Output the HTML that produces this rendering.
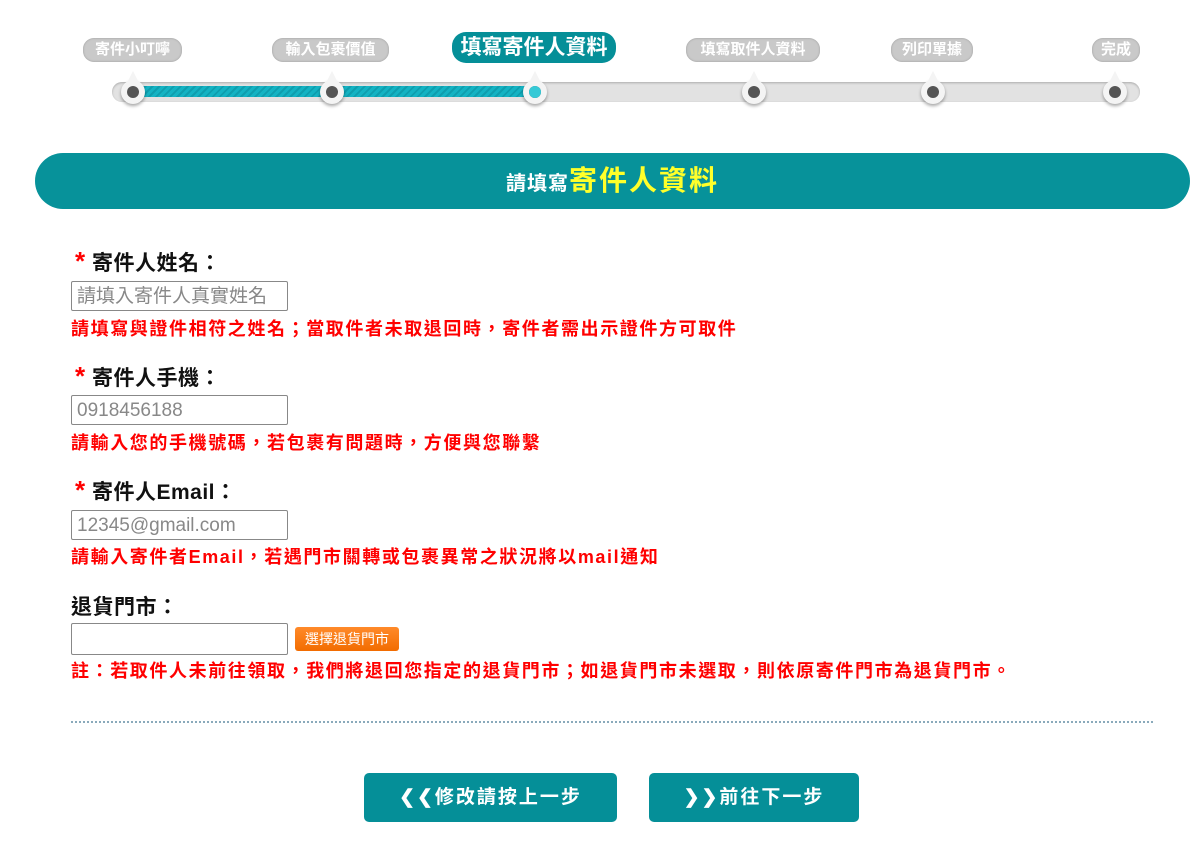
<!DOCTYPE html>
<html><head><meta charset="utf-8"><style>
body{margin:0;width:1200px;height:852px;background:#fff;font-family:"Liberation Sans","Noto Sans CJK TC",sans-serif;position:relative;overflow:hidden}
.a{position:absolute}
.pill{position:absolute;background:#c9c9c9;color:#fff;font-weight:bold;font-size:15px;border-radius:11px;height:24px;line-height:24px;text-align:center;top:38px;box-shadow:0 0 2px #999 inset}
.node{position:absolute;top:80px;width:24px;height:24px;border-radius:50%;background:#f4f4f4;box-shadow:0 2px 3px rgba(0,0,0,.35)}
.node::after{content:"";position:absolute;left:6px;top:6px;width:12px;height:12px;border-radius:50%;background:#555}
.node::before{content:"";position:absolute;left:6px;top:-9px;border-left:6px solid transparent;border-right:6px solid transparent;border-bottom:12px solid #f4f4f4}
.lbl{position:absolute;font-size:21px;font-weight:bold;color:#111;letter-spacing:0.5px}
.lbl b{color:#f00;font-size:26px}
.inp{position:absolute;left:71px;height:30px;border:1px solid #888;border-radius:2px;font-size:19px;color:#888;line-height:30px;padding-left:5px;box-sizing:border-box;width:217px}
.hint{position:absolute;left:71px;color:#f00;font-weight:bold;font-size:18px;letter-spacing:1.6px}
.btn{position:absolute;top:773px;height:49px;background:#058f98;color:#fff;border-radius:5px;font-weight:bold;font-size:19px;text-align:center;line-height:49px;letter-spacing:2px}
</style></head><body>
<div class="a" style="left:112px;top:82px;width:1028px;height:20px;background:#e2e2e2;border-radius:10px;box-shadow:0 1px 2px #aaa inset"></div>
<div class="a" style="left:133px;top:86px;width:402px;height:11px;background:repeating-linear-gradient(135deg,#14b3c3 0 3px,#0e9eae 3px 5px)"></div>
<div class="pill" style="left:83px;width:99px">寄件小叮嚀</div>
<div class="pill" style="left:272px;width:117px">輸入包裹價值</div>
<div class="a" style="left:452px;top:32px;width:164px;height:31px;background:#058f98;color:#fff;border-radius:14px;font-size:21px;font-weight:bold;text-align:center;line-height:31px">填寫寄件人資料</div>
<div class="pill" style="left:686px;width:134px">填寫取件人資料</div>
<div class="pill" style="left:891px;width:82px">列印單據</div>
<div class="pill" style="left:1092px;width:48px">完成</div>
<div class="node" style="left:121px"></div>
<div class="node" style="left:320px"></div>
<div class="node" style="left:523px"></div>
<div class="node" style="left:742px"></div>
<div class="node" style="left:921px"></div>
<div class="node" style="left:1103px"></div>
<div class="a" style="left:529px;top:86px;width:12px;height:12px;border-radius:50%;background:#35c9d6;z-index:2"></div>
<div class="a" style="left:35px;top:153px;width:1155px;height:56px;background:#07929a;border-radius:28px;text-align:center;line-height:56px;color:#fff;font-weight:bold;font-size:20px;letter-spacing:1px">請填寫<span style="color:#ffff2a;font-size:28px;letter-spacing:2px">寄件人資料</span></div>
<div class="lbl" style="left:75px;top:246px"><b>*</b> 寄件人姓名：</div>
<div class="inp" style="top:281px">請填入寄件人真實姓名</div>
<div class="hint" style="top:315px">請填寫與證件相符之姓名；當取件者未取退回時，寄件者需出示證件方可取件</div>
<div class="lbl" style="left:75px;top:361px"><b>*</b> 寄件人手機：</div>
<div class="inp" style="top:395px">0918456188</div>
<div class="hint" style="top:429px">請輸入您的手機號碼，若包裹有問題時，方便與您聯繫</div>
<div class="lbl" style="left:75px;top:475px"><b>*</b> 寄件人Email：</div>
<div class="inp" style="top:510px">12345@gmail.com</div>
<div class="hint" style="top:543px">請輸入寄件者Email，若遇門市關轉或包裹異常之狀況將以mail通知</div>
<div class="lbl" style="left:71px;top:591px">退貨門市：</div>
<div class="inp" style="top:623px;height:32px"></div>
<div class="a" style="left:295px;top:627px;width:104px;height:24px;background:linear-gradient(#ff8a2a,#f26c00);border-radius:3px;color:#fff;font-size:14px;line-height:24px;text-align:center">選擇退貨門市</div>
<div class="hint" style="top:657px;letter-spacing:1.6px">註：若取件人未前往領取，我們將退回您指定的退貨門市；如退貨門市未選取，則依原寄件門市為退貨門市。</div>
<div class="a" style="left:71px;top:721px;width:1082px;border-top:2px dotted #8aaabb"></div>
<div class="btn" style="left:364px;width:253px">❮❮修改請按上一步</div>
<div class="btn" style="left:649px;width:210px">❯❯前往下一步</div>
</body></html>
